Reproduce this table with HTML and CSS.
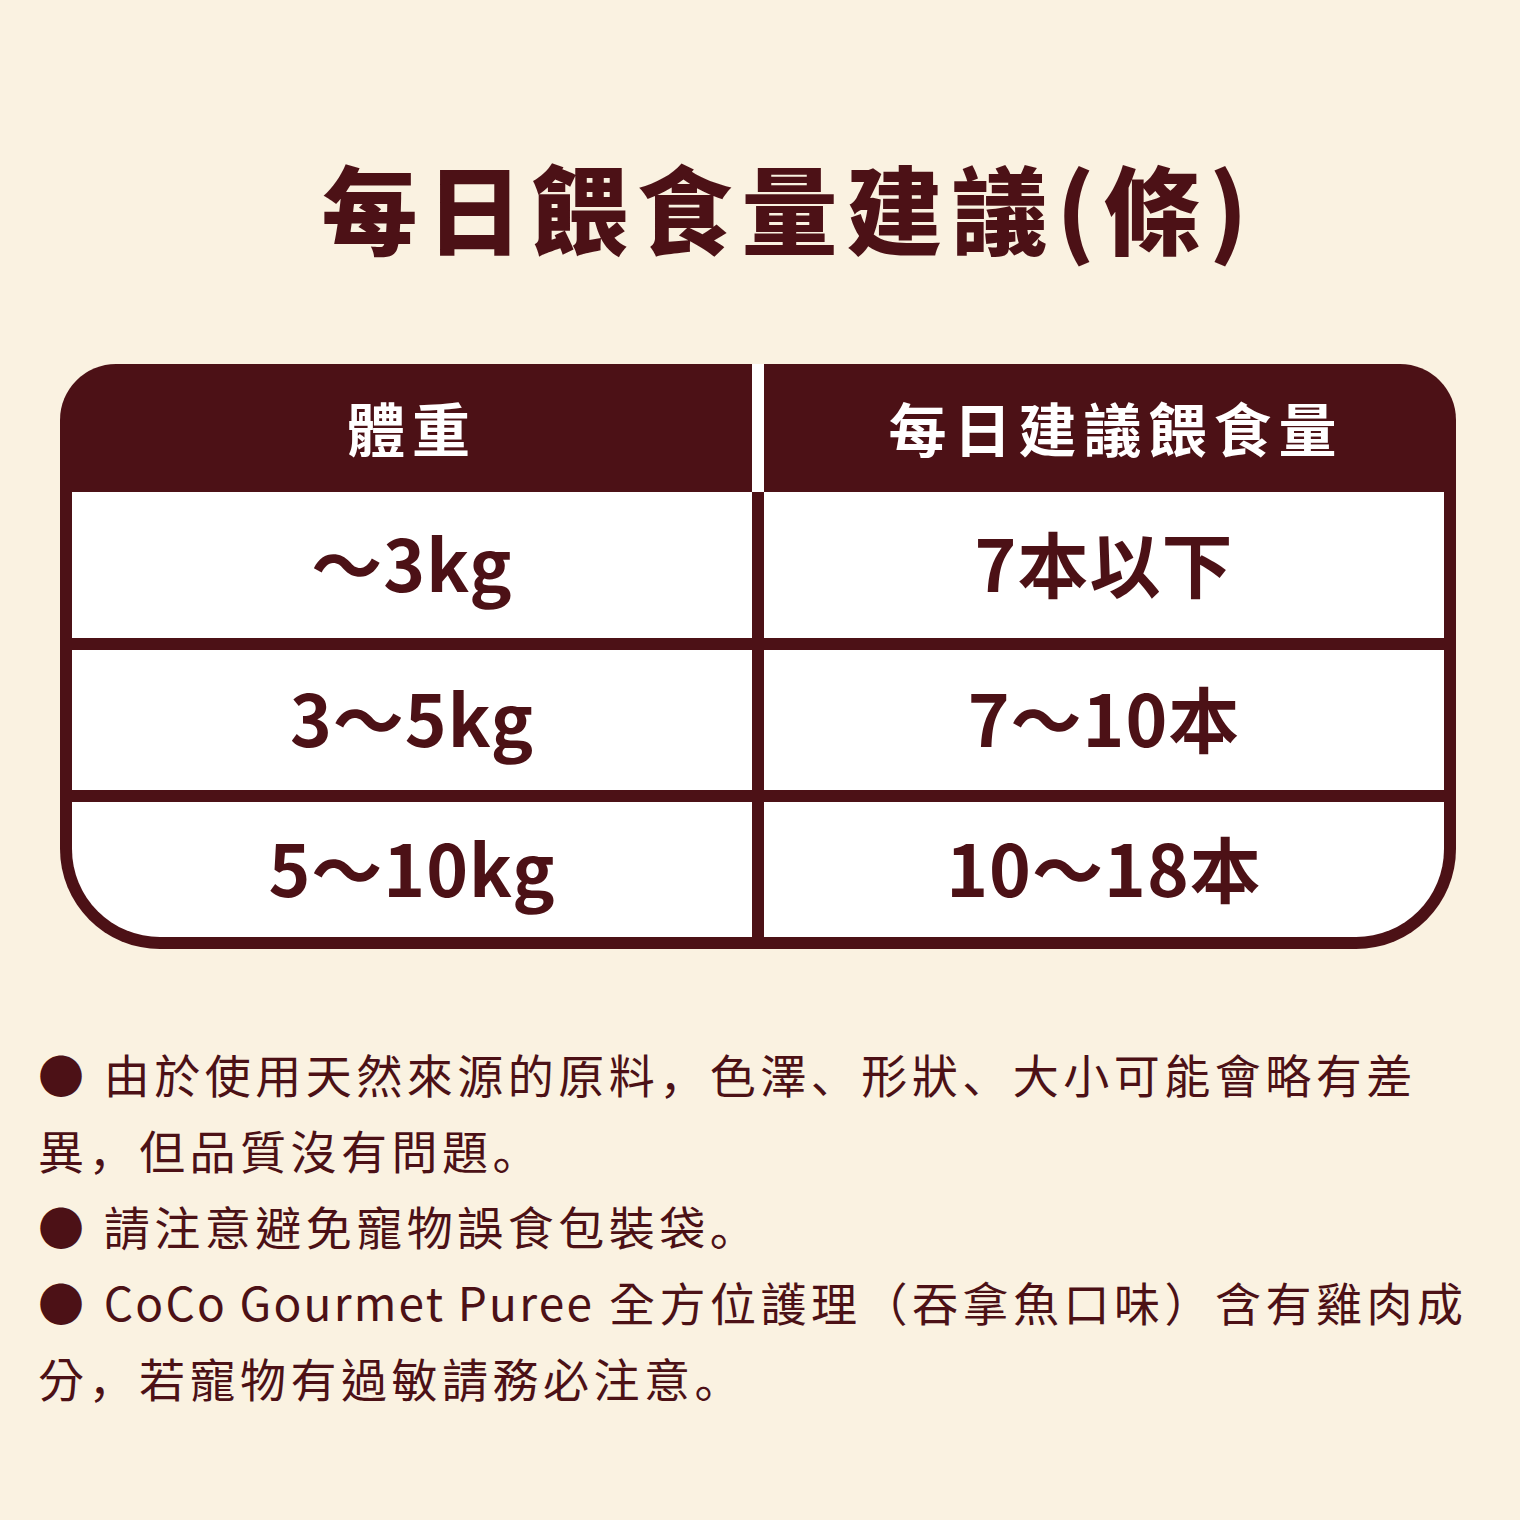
FILE: index.html
```html
<!DOCTYPE html>
<html lang="zh-Hant">
<head>
<meta charset="utf-8">
<title>每日餵食量建議</title>
<link rel="stylesheet" href="styles.css">
</head>
<body>
<div class="page">
  <h1 class="title">每日餵食量建議(條)</h1>
  <div class="table">
    <div class="thead">
      <div class="th">體重</div>
      <div class="th-divider"></div>
      <div class="th">每日建議餵食量</div>
    </div>
    <div class="tbody">
      <div class="td row1">～3kg</div>
      <div class="td row1">7本以下</div>
      <div class="td row2">3～5kg</div>
      <div class="td row2">7～10本</div>
      <div class="td row3 first">5～10kg</div>
      <div class="td row3 last">10～18本</div>
    </div>
  </div>
  <div class="notes">
    <p class="note"><span class="dot">●</span> 由於使用天然來源的原料<span class="p" lang="ja">，</span>色澤<span class="p" lang="ja">、</span>形狀<span class="p" lang="ja">、</span>大小可能會略有差<br>異<span class="p" lang="ja">，</span>但品質沒有問題<span class="p" lang="ja">。</span></p>
    <p class="note"><span class="dot">●</span> 請注意避免寵物誤食包裝袋<span class="p" lang="ja">。</span></p>
    <p class="note"><span class="dot">●</span> <span class="latin">CoCo Gourmet Puree</span> 全方位護理（吞拿魚口味）含有雞肉成<br>分<span class="p" lang="ja">，</span>若寵物有過敏請務必注意<span class="p" lang="ja">。</span></p>
  </div>
</div>
</body>
</html>
```
FILE: styles.css
```css
html, body {
  margin: 0;
  padding: 0;
  background: #faf2e1;
}
body {
  font-family: "Noto Sans CJK TC", "Noto Sans", sans-serif;
  color: #4c1116;
  width: 1520px;
  height: 1520px;
  overflow: hidden;
}
.page {
  padding-top: 157px;
}
.title {
  margin: 0;
  text-align: center;
  font-size: 96px;
  line-height: 98px;
  height: 98px;
  font-weight: 900;
  letter-spacing: 9px;
  padding-left: 58px;
}
.table {
  margin: 109px 0 0 60px;
  width: 1396px;
  background: #4c1116;
  border-radius: 56px 56px 100px 100px;
  overflow: hidden;
  padding-bottom: 12px;
}
.thead {
  display: grid;
  grid-template-columns: 1fr 12px 1fr;
  height: 128px;
}
.th {
  display: flex;
  align-items: center;
  justify-content: center;
  color: #fff;
  font-size: 58px;
  font-weight: 700;
  letter-spacing: 7px;
  padding-left: 12px;
  padding-bottom: 3px;
}
.th-divider {
  background: #fff;
}
.tbody {
  display: grid;
  grid-template-columns: 1fr 1fr;
  grid-template-rows: 146px 140px 135px;
  column-gap: 12px;
  row-gap: 12px;
  padding: 0 12px;
}
.td {
  background: #fff;
  display: flex;
  align-items: center;
  justify-content: center;
  font-size: 71px;
  font-weight: 700;
  letter-spacing: 1px;
  padding-bottom: 8px;
}
.td.first {
  border-bottom-left-radius: 88px;
}
.td.last {
  border-bottom-right-radius: 88px;
}
.notes {
  margin: 86px 0 0 38px;
}
.note {
  margin: 0;
  font-size: 46px;
  line-height: 76px;
  letter-spacing: 4.5px;
  font-weight: 400;
  white-space: nowrap;
}
.dot {
  letter-spacing: 0;
  margin-right: 5px;
}
.p {
  font-family: "Noto Sans CJK JP", "Noto Sans CJK SC", sans-serif;
}
.latin {
  letter-spacing: 2.2px;
}
```
